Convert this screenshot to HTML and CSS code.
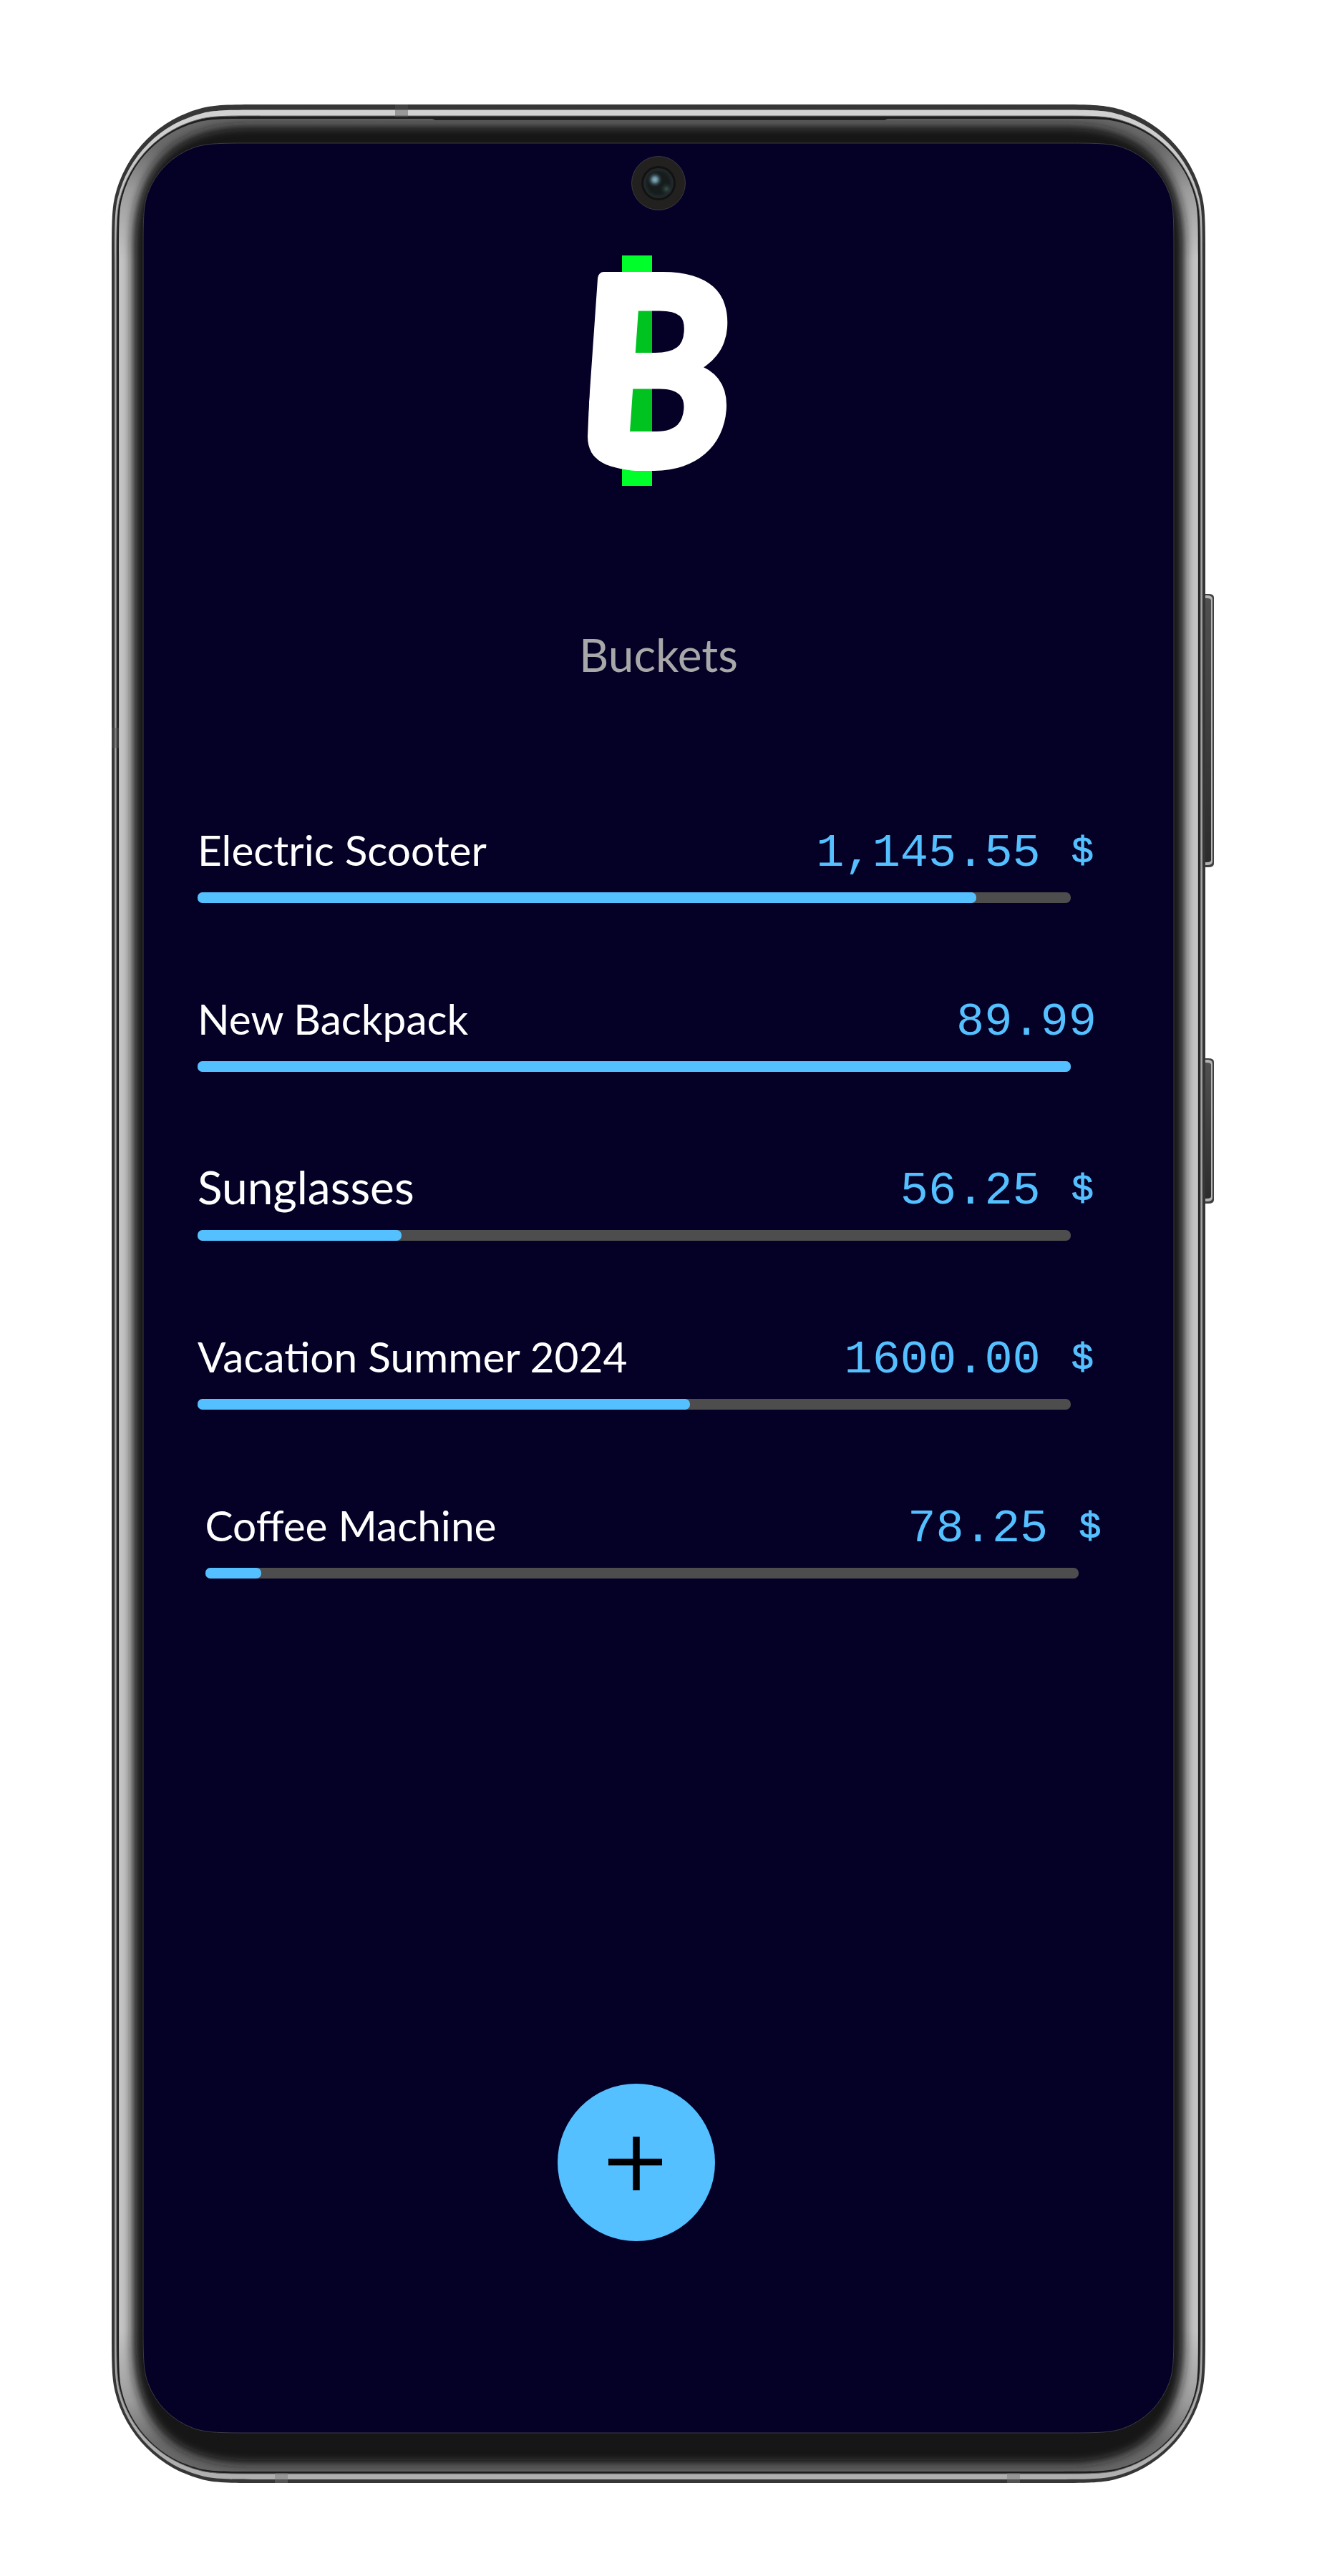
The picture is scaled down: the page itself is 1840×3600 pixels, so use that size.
FILE: index.html
```html
<!DOCTYPE html>
<html lang="en">
<head>
<meta charset="utf-8">
<title>Buckets</title>
<link rel="stylesheet" href="styles.css">
</head>
<body>
<main class="phone">
  <svg class="frame" viewBox="0 0 1840 3600" aria-hidden="true">
    <defs>
      <linearGradient id="rim" x1="0" y1="0" x2="0" y2="1">
        <stop offset="0" stop-color="#d2d2d2"/><stop offset=".03" stop-color="#c4c4c4"/><stop offset=".07" stop-color="#a2a2a2"/>
        <stop offset=".93" stop-color="#a2a2a2"/><stop offset="1" stop-color="#b0b0b0"/>
      </linearGradient>
      <linearGradient id="glass" x1="0" y1="0" x2="0" y2="1">
        <stop offset="0" stop-color="#666"/><stop offset=".012" stop-color="#6a6a6a"/><stop offset=".03" stop-color="#9c9c9c"/><stop offset=".06" stop-color="#c4c4c4"/>
        <stop offset=".94" stop-color="#c4c4c4"/><stop offset=".97" stop-color="#9c9c9c"/><stop offset=".988" stop-color="#6a6a6a"/><stop offset="1" stop-color="#646464"/>
      </linearGradient>
      <linearGradient id="key" x1="0" y1="0" x2="0" y2="1">
        <stop offset="0" stop-color="#505050"/><stop offset="1" stop-color="#2c2c2c"/>
      </linearGradient>
      <radialGradient id="glint"><stop offset="0" stop-color="#8fb6c6"/><stop offset=".35" stop-color="#5f8492"/><stop offset="1" stop-color="#1b2325" stop-opacity="0"/></radialGradient>
      <radialGradient id="tint"><stop offset="0" stop-color="#37574e"/><stop offset="1" stop-color="#1b2325" stop-opacity="0"/></radialGradient>
      <filter id="soft" x="-5%" y="-5%" width="110%" height="110%"><feGaussianBlur stdDeviation="7"/></filter>
      <filter id="thin" x="-5%" y="-5%" width="110%" height="110%"><feGaussianBlur stdDeviation="1"/></filter>
      <path id="glassShape" d="M357 166H1483c41 0 61.4 0 78.3 4a147 147 0 0 1 108.6 108.6c4 17 4 37.4 4 78.3V3263c0 41 0 61.4-4 78.3a147 147 0 0 1-108.6 108.6c-17 4-37.4 4-78.3 4H357c-41 0-61.4 0-78.3-4a147 147 0 0 1-108.6-108.6c-4-17-4-37.4-4-78.3V357c0-41 0-61.4 4-78.3a147 147 0 0 1 108.6-108.6c17-4 37.4-4 78.3-4Z"/>
      <clipPath id="glassClip"><use href="#glassShape"/></clipPath>
    </defs>

    <!-- side keys -->
    <path d="M1680 830h8q8 0 8 5v372q0 5-8 5h-8z" fill="#404040"/>
    <path d="M1680 832h6q8 0 8 5v367q0 5-8 5h-6z" fill="#b4b4b4"/>
    <path d="M1680 836h6q6 0 6 3v363q0 3-6 3h-6z" fill="url(#key)"/>
    <path d="M1680 1479h8q8 0 8 5v193q0 5-8 5h-8z" fill="#404040"/>
    <path d="M1680 1481h6q8 0 8 5v188q0 5-8 5h-6z" fill="#b4b4b4"/>
    <path d="M1680 1485h6q6 0 6 3v184q0 3-6 3h-6z" fill="url(#key)"/>

    <!-- metal body -->
    <path fill="#363636" d="M373 146H1467c46.5 0 69.8 0 89 4.6a167 167 0 0 1 123.4 123.4c4.6 19.2 4.6 42.5 4.6 89V3253c0 46.5 0 69.8-4.6 89a167 167 0 0 1-123.4 123.4c-19.2 4.6-42.5 4.6-89 4.6H373c-46.5 0-69.8 0-89-4.6a167 167 0 0 1-123.4-123.4c-4.6-19.2-4.6-42.5-4.6-89V363c0-46.5 0-69.8 4.6-89a167 167 0 0 1 123.4-123.4c19.2-4.6 42.5-4.6 89-4.6Z"/>
    <path fill="url(#rim)" d="M369 153.500H1471c44.800 0 67.200 0 85.700 4.400a161 161 0 0 1 118.800 118.800c4.400 18.500 4.400 41 4.400 85.700V3256c0 44.800 0 67.200-4.400 85.700a161 161 0 0 1-118.800 118.800c-18.500 4.400-41 4.400-85.700 4.400H369c-44.800 0-67.200 0-85.700-4.400a161 161 0 0 1-118.800-118.800c-4.400-18.500-4.400-41-4.400-85.700V362.500c0-44.800 0-67.200 4.400-85.700a161 161 0 0 1 118.800-118.800c18.500-4.400 41-4.400 85.700-4.400Z"/>
    <path fill="#1e1e1e" stroke="#6a6a6a" stroke-width="1" d="M363 162H1477c42.900 0 64.400 0 82.100 4.200a154 154 0 0 1 113.800 113.800c4.200 17.700 4.200 39.200 4.200 82.100V3257c0 42.900 0 64.400-4.200 82.100a154 154 0 0 1-113.800 113.800c-17.700 4.200-39.200 4.200-82.100 4.200H363c-42.900 0-64.400 0-82.100-4.200a154 154 0 0 1-113.800-113.800c-4.200-17.700-4.200-39.200-4.200-82.100V362c0-42.900 0-64.400 4.200-82.100a154 154 0 0 1 113.800-113.800c17.700-4.200 39.200-4.200 82.100-4.200Z"/>
    <g fill="#777" fill-opacity=".45">
      <rect x="552" y="146" width="18" height="18" fill="#555"/>
      <rect x="384" y="3456" width="18" height="14"/>
      <rect x="1407" y="3456" width="18" height="14"/>
      <rect x="156" y="1017" width="10" height="28" fill="#555"/>
    </g>

    <!-- curved glass edge -->
    <use href="#glassShape" fill="url(#glass)"/>
    <g clip-path="url(#glassClip)">
      <path filter="url(#soft)" fill="#151515" d="M350 176H1490C1605 176 1655 240 1655 350V3270C1655 3380 1605 3443 1490 3443H350C235 3443 185 3380 185 3270V350C185 240 235 176 350 176Z"/>
    </g>
    <path d="M604 166H1240L1236 168H608Z" fill="#222"/>

    <!-- display -->
    <path fill="#040026" stroke="#3c3c44" stroke-width="1" d="M354 200H1486c43.800 0 65.700 0 83.300 6.300a107 107 0 0 1 64.400 64.400c6.300 17.600 6.300 39.500 6.300 83.300V3246c0 43.800 0 65.700-6.300 83.300a107 107 0 0 1-64.400 64.400c-17.600 6.300-39.500 6.300-83.300 6.300H354c-43.800 0-65.700 0-83.300-6.300a107 107 0 0 1-64.400-64.400c-6.300-17.600-6.300-39.500-6.300-83.300V354c0-43.800 0-65.700 6.300-83.300a107 107 0 0 1 64.400-64.400c17.600-6.300 39.500-6.300 83.300-6.300Z"/>

    <!-- front camera -->
    <circle cx="920" cy="256" r="37.500" fill="#23211f" stroke="#45434a" stroke-width=".8"/>
    <circle cx="920" cy="256" r="24" fill="#121212"/>
    <circle cx="920" cy="256" r="21" fill="#22282a"/>
    <circle cx="920" cy="256" r="17" fill="#191e1f" filter="url(#thin)"/>
    <circle cx="915" cy="251" r="11" fill="url(#glint)"/>
    <circle cx="931" cy="264" r="9" fill="url(#tint)"/>
  </svg>

  <section class="screen">
    <svg class="logo" viewBox="800 357 240 322" role="img" aria-label="B">
      <defs>
        <clipPath id="roundCorner"><path d="M760 200H1100V800H900V659C850 656 821 645 821 610L838 200Z"/></clipPath>
      </defs>
      <rect x="869" y="357" width="42" height="322" fill="#00ff2a"/>
      <rect x="869" y="400" width="42" height="240" fill="#00c31f"/>
      <g clip-path="url(#roundCorner)">
        <text class="logo-letter" transform="translate(798 649.5) skewX(-4) scale(.915 1)" x="0" y="0">B</text>
      </g>
    </svg>
    <h1 class="title">Buckets</h1>

    <ul class="buckets">
      <li class="bucket">
        <div class="bucket-head"><span class="name">Electric Scooter</span><span class="amount">1,145.55<span class="currency">$</span></span></div>
        <div class="track"><div class="fill" style="width:89.2%"></div></div>
      </li>
      <li class="bucket">
        <div class="bucket-head"><span class="name">New Backpack</span><span class="amount bare">89.99</span></div>
        <div class="track"><div class="fill" style="width:100%"></div></div>
      </li>
      <li class="bucket">
        <div class="bucket-head"><span class="name large">Sunglasses</span><span class="amount">56.25<span class="currency">$</span></span></div>
        <div class="track"><div class="fill" style="width:23.4%"></div></div>
      </li>
      <li class="bucket">
        <div class="bucket-head"><span class="name">Vacation Summer 2024</span><span class="amount">1600.00<span class="currency">$</span></span></div>
        <div class="track"><div class="fill" style="width:56.4%"></div></div>
      </li>
      <li class="bucket shifted">
        <div class="bucket-head"><span class="name">Coffee Machine</span><span class="amount">78.25<span class="currency">$</span></span></div>
        <div class="track"><div class="fill" style="width:6.45%"></div></div>
      </li>
    </ul>

    <button class="add" aria-label="Add bucket">
      <svg viewBox="0 0 220 220" width="220" height="220"><path d="M71 109.500h75M110 74v75" stroke="#000" stroke-width="9.500" fill="none"/></svg>
    </button>
  </section>
</main>
</body>
</html>
```
FILE: styles.css
```css
* { box-sizing: border-box; }

body {
  margin: 0;
  background: #fff;
  font-family: Lato, "Open Sans", sans-serif;
}

.phone {
  position: relative;
  width: 1840px;
  height: 3600px;
  padding: 200px;
}

.frame {
  position: absolute;
  inset: 0;
  width: 1840px;
  height: 3600px;
}

.screen {
  position: relative;
  display: flex;
  flex-direction: column;
  height: 3200px;
  padding: 157px 76px 0;
}

.logo {
  display: block;
  width: 240px;
  height: 322px;
  margin-left: 524px;
  overflow: visible;
}

.logo-letter {
  font-family: Lato, sans-serif;
  font-size: 361px;
  font-weight: 700;
  fill: #fff;
  stroke: #fff;
  stroke-width: 17px;
  stroke-linejoin: round;
}

.title {
  margin: 196px 0 0;
  font-size: 64px;
  font-weight: 400;
  line-height: 80px;
  text-align: center;
  color: #a8a8a8;
}

.buckets {
  margin: 191px 0 0;
  padding: 0;
  list-style: none;
}

.bucket {
  width: 1256px;
  height: 236px;
}

.bucket.shifted { margin-left: 10.5px; }

.bucket-head {
  display: flex;
  justify-content: space-between;
  align-items: flex-start;
  height: 100.5px;
}

.name {
  font-size: 58.6px;
  line-height: 82px;
  color: #fff;
}

.name.large { font-size: 64px; }

.amount {
  display: flex;
  gap: 43px;
  align-items: baseline;
  margin: 7px 4px 0 0;
  font-family: "Liberation Mono", monospace;
  font-size: 65.3px;
  line-height: 80px;
  color: #54c0ff;
}

.amount.bare { margin-right: 0; }

.currency {
  font-size: 52px;
  line-height: 60px;
  -webkit-text-stroke: 1px #54c0ff;
  transform: translateY(-5px);
}

.track {
  width: 1220px;
  height: 15px;
  border-radius: 7px;
  background: #4d4d4d;
}

.fill {
  height: 100%;
  border-radius: 7px;
  background: #54c0ff;
}

.add {
  width: 220px;
  height: 220px;
  margin: 586px 0 0 503px;
  padding: 0;
  border: 0;
  border-radius: 50%;
  background: #54c0ff;
}

.add svg { display: block; }
```
